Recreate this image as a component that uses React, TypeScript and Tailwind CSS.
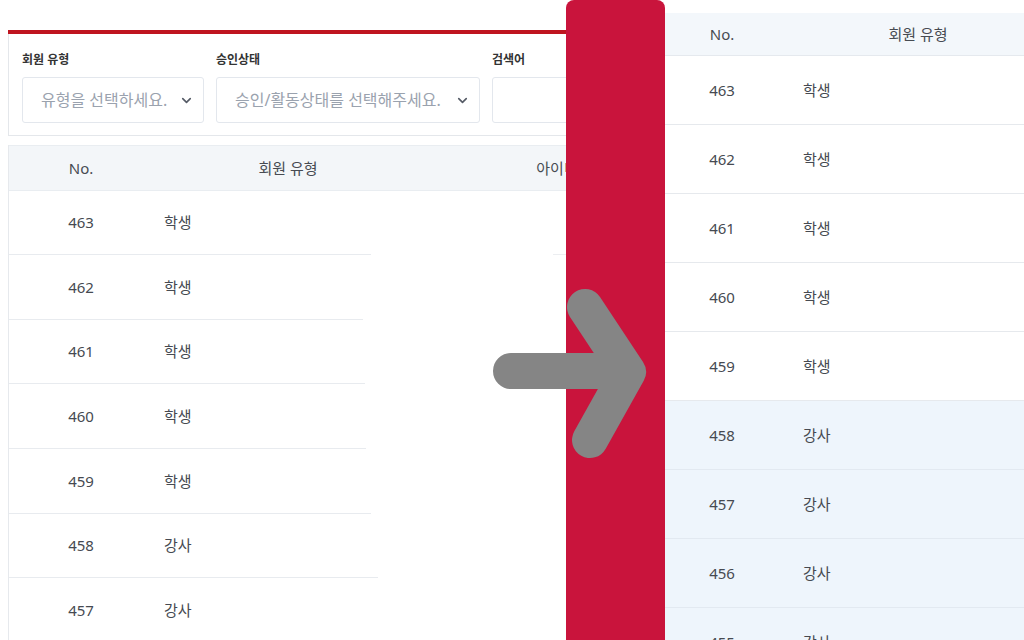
import { ChevronDown } from 'lucide-react';

const font = { fontFamily: '"Noto Sans", "Noto Sans CJK KR", sans-serif' };

const leftRows = [
    { no: 463, type: '학생', h: 'h-[63px]', line: 'w-[362px]', tail: true },
    { no: 462, type: '학생', h: 'h-[64px]', line: 'w-[354px]', tail: false },
    { no: 461, type: '학생', h: 'h-[63px]', line: 'w-[356px]', tail: false },
    { no: 460, type: '학생', h: 'h-[64px]', line: 'w-[357px]', tail: false },
    { no: 459, type: '학생', h: 'h-[64px]', line: 'w-[362px]', tail: false },
    { no: 458, type: '강사', h: 'h-[63px]', line: 'w-[369px]', tail: false },
    { no: 457, type: '강사', h: 'h-[64px]', line: 'w-[369px]', tail: false },
];

const rightRows = [
    { no: 463, type: '학생', alt: false },
    { no: 462, type: '학생', alt: false },
    { no: 461, type: '학생', alt: false },
    { no: 460, type: '학생', alt: false },
    { no: 459, type: '학생', alt: false },
    { no: 458, type: '강사', alt: true },
    { no: 457, type: '강사', alt: true },
    { no: 456, type: '강사', alt: true },
    { no: 455, type: '강사', alt: true },
];

const Select = ({ text, width }: { text: string; width: string }) => (
    <div className={`${width} flex h-[46px] items-center justify-between rounded-[3px] border border-[#e3e7ed] bg-white pl-[18px] pr-[9px]`}>
        <span className="text-[16px] text-[#9aa2ae]">{text}</span>
        <ChevronDown size={15} strokeWidth={2.6} className="text-[#555b66]" />
    </div>
);

const App = () => {
    return (
        <div className="relative flex h-[640px] w-[1024px] overflow-hidden bg-white text-[#464a51]" style={font}>
            {/* before */}
            <section className="w-[566px] shrink-0 overflow-hidden pl-[8px] pt-[30px]">
                <div className="w-[720px]">
                    <div className="h-[4px] bg-[#bf1520]" />
                    <div className="border-x border-b border-[#e4e7eb] px-[13px] pb-[12px] pt-[18px]">
                        <div className="flex gap-[12px]">
                            <div>
                                <div className="mb-[9px] h-[16px] text-[12px] font-semibold leading-[16px] text-[#333]">회원 유형</div>
                                <Select text="유형을 선택하세요." width="w-[182px]" />
                            </div>
                            <div>
                                <div className="mb-[9px] h-[16px] text-[12px] font-semibold leading-[16px] text-[#333]">승인상태</div>
                                <Select text="승인/활동상태를 선택해주세요." width="w-[264px]" />
                            </div>
                            <div>
                                <div className="mb-[9px] h-[16px] text-[12px] font-semibold leading-[16px] text-[#333]">검색어</div>
                                <div className="h-[46px] w-[200px] rounded-[3px] border border-[#e3e7ed]" />
                            </div>
                        </div>
                    </div>

                    <div className="mt-[9px] border-l border-[#e6e9ed]">
                        <div className="flex h-[46px] items-center border-y border-[#e9edf1] bg-[#f3f6f9] text-[15px] text-[#474b52]">
                            <div className="w-[144px] text-center">No.</div>
                            <div className="w-[270px] text-center">회원 유형</div>
                            <div className="w-[268px] text-center">아이디</div>
                        </div>
                        {leftRows.map((row) => (
                            <div key={row.no}>
                                <div className={`flex ${row.h} items-center text-[15px]`}>
                                    <div className="w-[144px] text-center">{row.no}</div>
                                    <div className="pl-[11px]">{row.type}</div>
                                </div>
                                <div className="flex h-px">
                                    <div className={`${row.line} bg-[#e8ebef]`} />
                                    {row.tail && <div className="ml-[182px] w-[20px] bg-[#eceef1]" />}
                                </div>
                            </div>
                        ))}
                    </div>
                </div>
            </section>

            {/* marker */}
            <div className="w-[99px] shrink-0 rounded-t-[8px] bg-[#c9143c]" />

            {/* after */}
            <section className="flex-1 overflow-hidden pt-[13px]">
                <div className="w-[420px]">
                    <div className="flex h-[43px] items-center border-b border-[#e5e9ee] bg-[#f3f7fb] text-[15px] text-[#474b52]">
                        <div className="w-[114px] text-center">No.</div>
                        <div className="w-[278px] text-center">회원 유형</div>
                    </div>
                    {rightRows.map((row) => (
                        <div
                            key={row.no}
                            className={`flex h-[69px] items-center border-b text-[15px] ${row.alt ? 'border-[#e2e9f1] bg-[#eef5fc]' : 'border-[#e6e9ed] bg-white'}`}
                        >
                            <div className="w-[114px] text-center">{row.no}</div>
                            <div className="pl-[24px]">{row.type}</div>
                        </div>
                    ))}
                </div>
            </section>

            {/* arrow */}
            <svg className="pointer-events-none absolute left-0 top-0" width="1024" height="640" viewBox="0 0 1024 640">
                <path
                    d="M511 371 H622 M585 307 L628 372 L590 440"
                    fill="none"
                    stroke="#858585"
                    strokeWidth="36"
                    strokeLinecap="round"
                    strokeLinejoin="round"
                />
            </svg>
        </div>
    );
};

export default App;
